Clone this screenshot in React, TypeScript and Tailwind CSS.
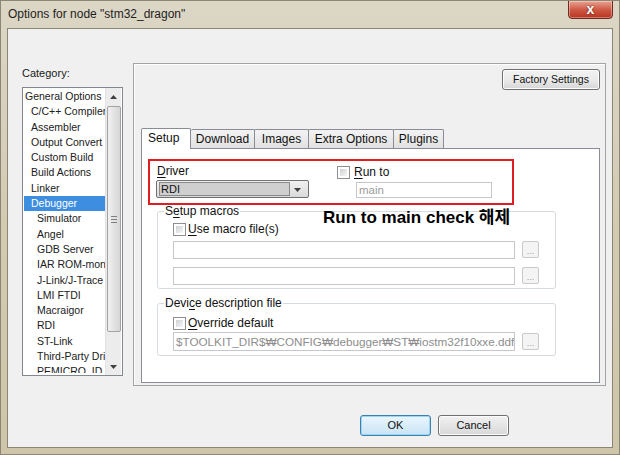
import React from "react";

const F = "font-['Liberation_Sans','Noto_Sans_CJK_KR',sans-serif]";

function Check() {
  return (
    <span className="block w-[13px] h-[13px] border border-[#8e8f8f] bg-white p-[2px] shrink-0">
      <span className="block w-full h-full bg-gradient-to-br from-[#cdd0d3] to-[#f7f7f7]" />
    </span>
  );
}

function Browse() {
  return (
    <div className="w-[17px] h-[17px] border border-[#c9c9c9] rounded-[2px] bg-[#f4f4f4] flex items-end justify-center text-[9px] leading-[11px] text-[#9a9a9a] shrink-0">
      ...
    </div>
  );
}

function U({ children }: { children: React.ReactNode }) {
  return <span className="underline underline-offset-[2px]">{children}</span>;
}

function Arrow({ down }: { down?: boolean }) {
  return (
    <svg width="7" height="4" viewBox="0 0 7 4">
      {down ? <path d="M0 0h7L3.5 4z" fill="#404040" /> : <path d="M0 4h7L3.5 0z" fill="#404040" />}
    </svg>
  );
}

const items: { t: string; i: number; sel?: boolean }[] = [
  { t: "General Options", i: 0 },
  { t: "C/C++ Compiler", i: 1 },
  { t: "Assembler", i: 1 },
  { t: "Output Convert", i: 1 },
  { t: "Custom Build", i: 1 },
  { t: "Build Actions", i: 1 },
  { t: "Linker", i: 1 },
  { t: "Debugger", i: 1, sel: true },
  { t: "Simulator", i: 2 },
  { t: "Angel", i: 2 },
  { t: "GDB Server", i: 2 },
  { t: "IAR ROM-moni", i: 2 },
  { t: "J-Link/J-Trace", i: 2 },
  { t: "LMI FTDI", i: 2 },
  { t: "Macraigor", i: 2 },
  { t: "RDI", i: 2 },
  { t: "ST-Link", i: 2 },
  { t: "Third-Party Dri", i: 2 },
  { t: "PEMICRO_ID", i: 2 },
];

const tabs = [
  { l: "Setup", w: "w-[50px]" },
  { l: "Download", w: "w-[64px]" },
  { l: "Images", w: "w-[55px]" },
  { l: "Extra Options", w: "w-[86px]" },
  { l: "Plugins", w: "w-[51px]" },
];

export default function App() {
  return (
    <div className={`w-[620px] h-[455px] overflow-hidden bg-gradient-to-b from-[#dcd6c6] via-[#d3cab2] to-[#cfc5aa] border border-[#8e8672] flex flex-col ${F}`}>
      {/* title bar */}
      <div className="h-[27px] flex items-start justify-between shrink-0">
        <div className="pl-[7px] pt-[5px] text-[12px] leading-[16px] text-[#1e1e1e]">
          Options for node "stm32_dragon"
        </div>
        <div className="mr-[6px] -mt-px w-[45px] h-[19px] rounded-b-[4px] border border-[#6e2b22] bg-gradient-to-b from-[#e8a293] via-[#cf5a46] to-[#b8321f] flex items-center justify-center shadow-[inset_0_0_0_1px_rgba(255,255,255,0.35)]">
          <span className="text-white font-bold text-[14px] leading-[13px] [text-shadow:0_0_2px_#5a1a10]">x</span>
        </div>
      </div>

      {/* client area */}
      <div className="mx-[6px] h-[420px] border border-[#8a8574] bg-[#f0f0f0] flex flex-col">
        <div className="flex pt-[34px] pl-[14px]">
          {/* category */}
          <div className="w-[101px] flex flex-col">
            <div className="h-[24px] pt-[3px] text-[11px] leading-[14px] text-[#1a1a1a]">Category:</div>
            <div className="h-[289px] border border-[#828790] bg-white flex">
              <div className="w-[82px] h-[285px] overflow-hidden pt-[1px]">
                {items.map((it) => (
                  <div
                    key={it.t}
                    className={`h-[15.3px] leading-[15px] text-[10.5px] whitespace-nowrap ${
                      it.i === 0 ? "pl-[2px]" : it.i === 1 ? "pl-[8px]" : "pl-[14px]"
                    } ${it.sel ? "bg-[#3d8ee0] text-white ml-px" : "text-[#202020]"}`}
                  >
                    {it.sel ? <span className="-ml-px">{it.t}</span> : it.t}
                  </div>
                ))}
              </div>
              <div className="w-[16px] bg-[#ececec] border-l border-[#e2e2e2] flex flex-col items-center">
                <div className="h-[17px] flex items-center justify-center">
                  <Arrow />
                </div>
                <div className="w-[14px] h-[226px] mt-[1px] rounded-[2px] border border-[#a2a2a2] bg-gradient-to-r from-[#f1f1f1] to-[#d6d6d6] flex flex-col items-center justify-center gap-[2px]">
                  <span className="block w-[6px] h-px bg-[#7e7e7e]" />
                  <span className="block w-[6px] h-px bg-[#7e7e7e]" />
                  <span className="block w-[6px] h-px bg-[#7e7e7e]" />
                </div>
                <div className="flex-1" />
                <div className="h-[17px] flex items-center justify-center">
                  <Arrow down />
                </div>
              </div>
            </div>
          </div>

          {/* right panel */}
          <div className="ml-[10px] w-[473px] h-[323px] border border-[#a3a3a3] shadow-[inset_1px_1px_0_#fff] flex flex-col pl-[7px] pr-[4px] pt-[5px]">
            <div className="flex justify-end pr-px">
              <div className="w-[98px] h-[21px] border border-[#707070] rounded-[3px] bg-gradient-to-b from-[#f2f2f2] via-[#ebebeb] to-[#d6d6d6] shadow-[inset_0_0_0_1px_#fcfcfc] flex items-center justify-center text-[10.5px] text-[#111]">
                Factory Settings
              </div>
            </div>

            {/* tab strip */}
            <div className="mt-[37px] h-[21px] flex items-end">
              {tabs.map((t, i) =>
                i === 0 ? (
                  <div
                    key={t.l}
                    className={`${t.w} h-[21px] relative z-10 -mb-px bg-white border border-b-0 border-[#898c95] rounded-t-[2px] pl-[6px] pt-[2px] text-[12px] leading-[15px] text-[#111]`}
                  >
                    {t.l}
                  </div>
                ) : (
                  <div
                    key={t.l}
                    className={`${t.w} h-[19px] -ml-px border border-b-0 border-[#898c95] rounded-t-[2px] bg-gradient-to-b from-[#f3f3f3] to-[#e1e1e1] flex items-center justify-center text-[12px] text-[#111] ${
                      i === 1 ? "ml-0 border-l-0" : ""
                    }`}
                  >
                    {t.l}
                  </div>
                )
              )}
            </div>

            {/* tab pane */}
            <div className="relative w-[459px] h-[235px] border border-[#898c95] bg-white pl-[14px] pt-[15px] text-[12px] text-[#111]">
              <div className="flex">
                <div className="w-[153px] flex flex-col">
                  <div className="leading-[14px] pl-px">
                    <U>D</U>river
                  </div>
                  <div className="mt-[2px] h-[18px] border border-[#707070] rounded-[2px] bg-gradient-to-b from-[#f1f1f1] to-[#dadada] flex items-center pl-[2px] pr-[4px]">
                    <div className="w-[131px] h-[14px] border border-[#8a8a8a] bg-[#cfcfcf] leading-[12px] pl-[1px] text-[11px]">
                      RDI
                    </div>
                    <div className="flex-1 flex justify-center pt-px">
                      <Arrow down />
                    </div>
                  </div>
                </div>
                <div className="ml-[28px] flex flex-col">
                  <div className="h-[14px] mt-px flex items-center gap-[4px]">
                    <Check />
                    <span className="leading-[14px]">
                      <U>R</U>un to
                    </span>
                  </div>
                  <div className="ml-[19px] mt-[3px] w-[136px] h-[16px] border border-[#c5c7cc] bg-white leading-[14px] pl-[2px] text-[11.5px] text-[#9b9b9b]">
                    main
                  </div>
                </div>
              </div>

              <fieldset className="mt-[6px] ml-px w-[399px] border border-[#d5dbe0] rounded-[3px] px-0">
                <legend className="ml-[6px] px-[1px] leading-[14px]">
                  S<U>e</U>tup macros
                </legend>
                <div className="pl-[15px] pb-[3px]">
                  <div className="mt-[4px] h-[14px] flex items-center gap-[2px]">
                    <Check />
                    <span>
                      <U>U</U>se macro file(s)
                    </span>
                  </div>
                  <div className="mt-[5px] flex gap-[7px]">
                    <div className="w-[342px] h-[18px] border border-[#c5c7cc] bg-white" />
                    <Browse />
                  </div>
                  <div className="mt-[8px] flex gap-[7px]">
                    <div className="w-[342px] h-[18px] border border-[#c5c7cc] bg-white" />
                    <Browse />
                  </div>
                </div>
              </fieldset>

              <fieldset className="mt-[7px] ml-px w-[399px] border border-[#d5dbe0] rounded-[3px] px-0">
                <legend className="ml-[6px] px-[1px] leading-[14px]">
                  Devi<U>c</U>e description file
                </legend>
                <div className="pl-[15px] pb-[4px]">
                  <div className="mt-[6px] h-[14px] flex items-center gap-[2px]">
                    <Check />
                    <span>
                      <U>O</U>verride default
                    </span>
                  </div>
                  <div className="mt-[2px] flex gap-[7px] items-center">
                    <div className="w-[342px] h-[19px] border border-[#c5c7cc] bg-white pl-[2px] leading-[17px] text-[11.7px] text-[#8d8d8d] whitespace-nowrap overflow-hidden">
                      $TOOLKIT_DIR$₩CONFIG₩debugger₩ST₩iostm32f10xxe.ddf
                    </div>
                    <Browse />
                  </div>
                </div>
              </fieldset>

              {/* annotations */}
              <div className="absolute left-[6px] top-[10px] w-[366px] h-[46px] border-2 border-[#e11d24]" />
              <div className="absolute left-[181px] top-[59px] text-[17px] leading-[20px] font-bold text-black whitespace-nowrap">
                Run to main check 해제
              </div>
            </div>
          </div>
        </div>

        {/* buttons */}
        <div className="mt-[29px] flex justify-end gap-[7px] pr-[103px]">
          <div className="w-[71px] h-[21px] border border-[#3c7fb1] rounded-[3px] bg-gradient-to-b from-[#eaf6fd] to-[#c9e4f5] shadow-[inset_0_0_0_1px_#9fd5f3] flex items-center justify-center text-[11px] text-[#111]">
            OK
          </div>
          <div className="w-[71px] h-[21px] border border-[#707070] rounded-[3px] bg-gradient-to-b from-[#f2f2f2] to-[#d8d8d8] shadow-[inset_0_0_0_1px_#fcfcfc] flex items-center justify-center text-[11px] text-[#111]">
            Cancel
          </div>
        </div>
      </div>
    </div>
  );
}
